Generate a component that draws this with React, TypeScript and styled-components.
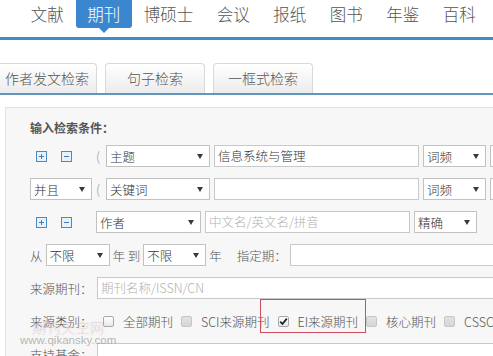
import styled, { createGlobalStyle } from 'styled-components';

const GlobalStyle = createGlobalStyle`
  html, body {
    margin: 0;
    padding: 0;
    background: #fff;
    overflow: hidden;
  }
  body {
    font-family: "Noto Sans CJK SC", "Noto Sans", sans-serif;
    font-weight: 300;
  }
`;

const Page = styled.div`
  position: relative;
  width: 620px;
  height: 356px;
  overflow: hidden;
`;

const Nav = styled.div`
  display: flex;
  height: 37px;
  padding-left: 19px;
  border-bottom: 3px solid #3d8dca;
`;

const NavItem = styled.div<{ $active?: boolean }>`
  position: relative;
  height: 28px;
  line-height: 28px;
  padding: 0 11.75px;
  font-size: 16.5px;
  color: ${(p) => (p.$active ? '#fff' : '#555')};
  background: ${(p) => (p.$active ? '#3a87cf' : 'transparent')};
  border-radius: 0 0 3px 3px;
  &::after {
    content: '';
    display: ${(p) => (p.$active ? 'block' : 'none')};
    position: absolute;
    left: 50%;
    bottom: -5px;
    margin-left: -5px;
    border-left: 5px solid transparent;
    border-right: 5px solid transparent;
    border-top: 5px solid #3a87cf;
  }
`;

const TabBar = styled.div`
  display: flex;
  gap: 8px;
  margin-top: 23px;
  margin-left: -3px;
  border-bottom: 2px solid #6197bf;
`;

const Tab = styled.div`
  width: 100px;
  height: 30px;
  box-sizing: border-box;
  border: 1px solid #d9d9d9;
  border-bottom: none;
  border-radius: 4px 4px 0 0;
  background: linear-gradient(#ffffff, #ececec);
  font-size: 14px;
  line-height: 29px;
  color: #555;
  text-align: center;
`;

const Panel = styled.div`
  margin: 12px 0 0 5px;
  border: 1px solid #e3e3e3;
  background: #f7f7f7;
  padding: 11px 0 20px 24px;
`;

const Title = styled.div`
  height: 18px;
  line-height: 18px;
  font-size: 12px;
  font-weight: bold;
  color: #555;
  margin-bottom: 8px;
`;

const Form = styled.div`
  display: flex;
  flex-direction: column;
  gap: 11px;
`;

const Row = styled.div<{ $gap?: number }>`
  display: flex;
  align-items: center;
  height: 22px;
  gap: ${(p) => p.$gap ?? 4}px;
  font-size: 12.5px;
  color: #555;
`;

const Lead = styled.div`
  display: flex;
  align-items: center;
  width: 62px;
  flex-shrink: 0;
`;

const IconGroup = styled.div`
  display: flex;
  gap: 14px;
  padding-left: 6px;
`;

const Paren = styled.span`
  width: 6px;
  font-size: 13px;
  color: #999;
  flex-shrink: 0;
`;

const SelectBox = styled.div<{ $w: number }>`
  width: ${(p) => p.$w}px;
  height: 22px;
  box-sizing: border-box;
  flex-shrink: 0;
  display: flex;
  align-items: center;
  justify-content: space-between;
  padding: 0 6px 0 3px;
  border: 1px solid #c2c2c2;
  background: #fff;
  font-size: 12.5px;
  color: #333;
`;

const Arrow = styled.span`
  width: 0;
  height: 0;
  border-left: 3px solid transparent;
  border-right: 3px solid transparent;
  border-top: 5px solid #3a3a3a;
`;

const TextBox = styled.div<{ $w?: number; $ph?: boolean }>`
  ${(p) => (p.$w ? `width: ${p.$w}px; flex-shrink: 0;` : 'flex: 1;')}
  height: 22px;
  box-sizing: border-box;
  padding-left: 3px;
  border: 1px solid #c9c9c9;
  background: #fff;
  font-size: 12.5px;
  line-height: 20px;
  color: ${(p) => (p.$ph ? '#b0b0b0' : '#333')};
  white-space: nowrap;
  overflow: hidden;
`;

const Txt = styled.span<{ $ml?: number }>`
  margin-left: ${(p) => p.$ml ?? 0}px;
  white-space: nowrap;
  flex-shrink: 0;
`;

const Label = styled.span`
  width: 67px;
  flex-shrink: 0;
  color: #555;
`;

const CheckItem = styled.div`
  position: relative;
  display: flex;
  align-items: center;
  height: 22px;
  gap: 9px;
  margin-right: 8px;
  flex-shrink: 0;
  white-space: nowrap;
  color: #555;
`;

const Box = styled.span<{ $disabled?: boolean }>`
  width: 11px;
  height: 11px;
  box-sizing: border-box;
  border: 1px solid ${(p) => (p.$disabled ? '#c6c6c6' : '#a8a8a8')};
  border-radius: 2px;
  background: ${(p) => (p.$disabled ? 'linear-gradient(#e2e2e2, #d6d6d6)' : 'linear-gradient(#fff, #e9e9e9)')};
  display: flex;
  align-items: center;
  justify-content: center;
`;

const Highlight = styled.span`
  position: absolute;
  left: -18px;
  top: -11px;
  width: 106px;
  height: 34px;
  box-sizing: border-box;
  border: 1px solid #cf4d5c;
  pointer-events: none;
`;

const Watermark = styled.div`
  position: absolute;
  left: 20px;
  top: 320px;
  display: flex;
  flex-direction: column;
  align-items: center;
  line-height: 1;
  pointer-events: none;
`;

const MarkTitle = styled.span`
  font-size: 14px;
  color: rgba(185, 180, 235, 0.4);
  text-shadow: 0 0 2px rgba(240, 200, 160, 0.5);
  letter-spacing: 0.5px;
`;

const MarkUrl = styled.span`
  font-family: "Liberation Sans", Arial, sans-serif;
  font-size: 11.5px;
  color: rgba(150, 150, 150, 0.7);
  margin-top: 1px;
`;

function SquareIcon({ minus }: { minus?: boolean }) {
  return (
    <svg width="11" height="11" viewBox="0 0 11 11">
      <rect x="0.5" y="0.5" width="10" height="10" fill="#e6f1fa" stroke="#4a8bc4" />
      <line x1="3" y1="5.5" x2="8" y2="5.5" stroke="#3c7fba" />
      {!minus && <line x1="5.5" y1="3" x2="5.5" y2="8" stroke="#3c7fba" />}
    </svg>
  );
}

function Select({ label, w }: { label: string; w: number }) {
  return (
    <SelectBox $w={w}>
      <span>{label}</span>
      <Arrow />
    </SelectBox>
  );
}

function Check({ label, checked, disabled }: { label: string; checked?: boolean; disabled?: boolean }) {
  return (
    <CheckItem>
      <Box $disabled={disabled}>
        {checked && (
          <svg width="9" height="9" viewBox="0 0 9 9">
            <path d="M1.2 4.6 L3.5 7 L7.8 1.6" fill="none" stroke="#222" strokeWidth="1.8" />
          </svg>
        )}
      </Box>
      <span>{label}</span>
      {checked && <Highlight />}
    </CheckItem>
  );
}

const navItems = ['文献', '期刊', '博硕士', '会议', '报纸', '图书', '年鉴', '百科'];

export default function App() {
  return (
    <Page>
      <GlobalStyle />
      <Nav>
        {navItems.map((n) => (
          <NavItem key={n} $active={n === '期刊'}>
            {n}
          </NavItem>
        ))}
      </Nav>
      <TabBar>
        <Tab>作者发文检索</Tab>
        <Tab>句子检索</Tab>
        <Tab>一框式检索</Tab>
      </TabBar>
      <Panel>
        <Title>输入检索条件：</Title>
        <Form>
          <Row>
            <Lead>
              <IconGroup>
                <SquareIcon />
                <SquareIcon minus />
              </IconGroup>
            </Lead>
            <Paren>(</Paren>
            <Select label="主题" w={104} />
            <TextBox $w={205}>信息系统与管理</TextBox>
            <Select label="词频" w={63} />
            <Select label="精确" w={63} />
          </Row>
          <Row>
            <Lead>
              <Select label="并且" w={62} />
            </Lead>
            <Paren>(</Paren>
            <Select label="关键词" w={104} />
            <TextBox $w={205} />
            <Select label="词频" w={63} />
            <Select label="精确" w={63} />
          </Row>
          <Row>
            <Lead>
              <IconGroup>
                <SquareIcon />
                <SquareIcon minus />
              </IconGroup>
            </Lead>
            <Select label="作者" w={105} />
            <TextBox $w={205} $ph>
              中文名/英文名/拼音
            </TextBox>
            <Select label="精确" w={63} />
          </Row>
          <Row $gap={3}>
            <Txt>从</Txt>
            <Select label="不限" w={64} />
            <Txt>年 到</Txt>
            <Select label="不限" w={63} />
            <Txt>年</Txt>
            <Txt $ml={12}>指定期：</Txt>
            <TextBox />
          </Row>
          <Row $gap={0}>
            <Label>来源期刊：</Label>
            <TextBox $ph>期刊名称/ISSN/CN</TextBox>
          </Row>
          <Row $gap={0}>
            <Label>来源类别：</Label>
            <Txt $ml={6} />
            <Check label="全部期刊" />
            <Check label="SCI来源期刊" disabled />
            <Check label="EI来源期刊" checked />
            <Check label="核心期刊" disabled />
            <Check label="CSSCI" disabled />
          </Row>
          <Row $gap={0}>
            <Label>支持基金：</Label>
            <TextBox />
          </Row>
        </Form>
      </Panel>
      <Watermark>
        <MarkTitle>期刊天空网</MarkTitle>
        <MarkUrl>www.qikansky.com</MarkUrl>
      </Watermark>
    </Page>
  );
}
